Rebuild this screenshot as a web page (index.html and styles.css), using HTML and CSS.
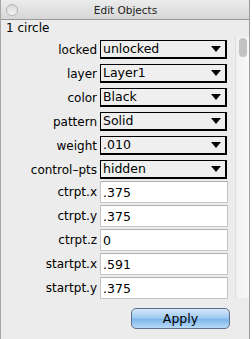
FILE: index.html
```html
<!DOCTYPE html>
<html lang="en">
<head>
    <meta charset="UTF-8">
    <title>Edit Objects</title>
    <link rel="stylesheet" href="styles.css">
</head>
<body>
<div class="window">
    <div class="titlebar">
        <span class="close"></span>
        <span class="title">Edit Objects</span>
    </div>
    <div class="summary">1 circle</div>
    <div class="panel">
        <div class="fields">
            <div class="row choice">
                <label>locked</label>
                <div class="select">unlocked<span class="arrow"></span></div>
            </div>
            <div class="row choice">
                <label>layer</label>
                <div class="select">Layer1<span class="arrow"></span></div>
            </div>
            <div class="row choice">
                <label>color</label>
                <div class="select">Black<span class="arrow"></span></div>
            </div>
            <div class="row choice">
                <label>pattern</label>
                <div class="select">Solid<span class="arrow"></span></div>
            </div>
            <div class="row choice">
                <label>weight</label>
                <div class="select">.010<span class="arrow"></span></div>
            </div>
            <div class="row choice">
                <label>control–pts</label>
                <div class="select">hidden<span class="arrow"></span></div>
            </div>
            <div class="row entry">
                <label>ctrpt.x</label>
                <input type="text" value=".375">
            </div>
            <div class="row entry">
                <label>ctrpt.y</label>
                <input type="text" value=".375">
            </div>
            <div class="row entry">
                <label>ctrpt.z</label>
                <input type="text" value="0">
            </div>
            <div class="row entry">
                <label>startpt.x</label>
                <input type="text" value=".591">
            </div>
            <div class="row entry">
                <label>startpt.y</label>
                <input type="text" value=".375">
            </div>
        </div>
        <div class="scrollbar"><div class="thumb"></div></div>
    </div>
    <div class="actions">
        <button class="apply">Apply</button>
    </div>
</div>
</body>
</html>
```

FILE: styles.css
```css
body {
    margin: 0;
    background-color: white;
    font-family: "DejaVu Sans", sans-serif;
    font-size: 12px;
    color: black;
}

.window {
    width: 248px;
    height: 339px;
    background-color: #ececec;
    border-left: 1px solid #a6a6a6;
    border-right: 1px solid #9c9c9c;
    display: flex;
    flex-direction: column;
}

.titlebar {
    height: 19px;
    border-bottom: 1px solid #9a9a9a;
    background: linear-gradient(#ececec, #d6d6d6);
    display: flex;
    align-items: center;
    position: relative;
}

.close {
    width: 10px;
    height: 10px;
    margin-left: 5px;
    border-radius: 50%;
    border: 1px solid #b4b4b4;
    background: linear-gradient(#d8d8d8, #f4f4f4);
}

.title {
    flex: 1;
    text-align: center;
    font-size: 10.5px;
    margin-right: 16px;
    color: #222;
}

.summary {
    height: 17px;
    padding-left: 5px;
    line-height: 17px;
}

.panel {
    display: flex;
    height: 261px;
}

.fields {
    flex: 1;
    display: flex;
    flex-direction: column;
    padding-top: 3px;
}

.row {
    display: flex;
    align-items: center;
}

.row label {
    width: 96px;
    text-align: right;
    margin-right: 3px;
}

.choice {
    height: 19px;
    margin-bottom: 5px;
}

.choice:nth-child(6) {
    margin-bottom: 2px;
}

.entry {
    height: 22px;
    margin-bottom: 2px;
}

.select {
    box-sizing: border-box;
    width: 127px;
    height: 19px;
    border: 1px solid black;
    border-right-width: 2px;
    border-bottom-width: 2px;
    background-color: #efefef;
    padding-left: 2px;
    font-size: 12.5px;
    line-height: 16px;
    position: relative;
}

.arrow {
    position: absolute;
    right: 4px;
    top: 5px;
    border-left: 5px solid transparent;
    border-right: 5px solid transparent;
    border-top: 6px solid black;
}

.entry input {
    box-sizing: border-box;
    width: 128px;
    height: 22px;
    margin: 0;
    border: 1px solid #c4c4c4;
    border-top-color: #b0b0b0;
    background-color: white;
    padding: 0 0 0 2px;
    font-family: "DejaVu Sans", sans-serif;
    font-size: 12.5px;
    color: black;
    outline: none;
}

.scrollbar {
    width: 13px;
    border-left: 1px solid #dedede;
    background: linear-gradient(to right, #f0f0f0, #f8f8f8);
    padding-top: 1px;
}

.thumb {
    width: 8px;
    height: 19px;
    margin-left: 3px;
    border-radius: 4px;
    background-color: #c2c2c2;
}

.actions {
    display: flex;
    justify-content: flex-end;
    padding: 10px 19px 0 0;
}

.apply {
    width: 99px;
    height: 21px;
    border: 1px solid #5f6f8e;
    border-radius: 5px;
    background: linear-gradient(#d4e6f8, #a2cbf1 45%, #7fb6ec 55%, #b9dbf8);
    font-family: "DejaVu Sans", sans-serif;
    font-size: 12.5px;
    color: black;
    padding: 0;
}
```
